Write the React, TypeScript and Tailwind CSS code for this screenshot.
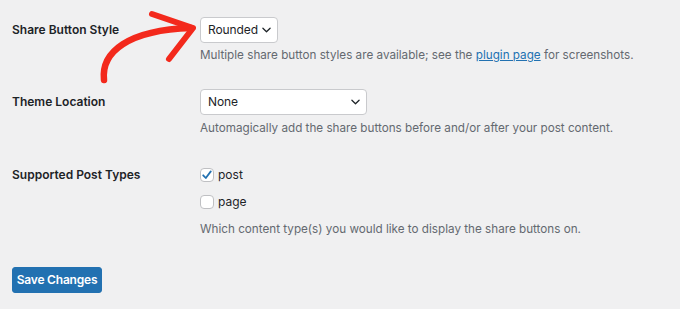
import React from "react";

function Chevron({ className }: { className?: string }) {
  return (
    <svg viewBox="0 0 10 6" className={className} fill="none">
      <path d="M1 1 L5 5 L9 1" stroke="#1d2327" strokeWidth="1.4" strokeLinecap="round" strokeLinejoin="round" />
    </svg>
  );
}

function Select({ value, width }: { value: string; width: string }) {
  return (
    <div
      className={`flex h-[26px] items-center justify-between rounded-[4px] border border-[#c9cacd] bg-white pl-[7px] pr-[6px] text-[12px] tracking-[-0.1px] text-[#1d2327] ${width}`}
    >
      <span>{value}</span>
      <Chevron className="h-[6px] w-[9px] shrink-0" />
    </div>
  );
}

function Checkbox({ checked }: { checked: boolean }) {
  return (
    <div className="flex h-[14px] w-[14px] items-center justify-center rounded-[4px] border border-[#bfc0c3] bg-white">
      {checked && (
        <svg viewBox="0 0 12 12" className="h-[12px] w-[12px]" fill="none">
          <path d="M2.2 6.3 L4.8 9 L9.8 2.4" stroke="#2271b1" strokeWidth="1.8" strokeLinecap="round" strokeLinejoin="round" />
        </svg>
      )}
    </div>
  );
}

export default function App() {
  return (
    <div
      className="relative h-[309px] w-[680px] overflow-hidden bg-[#f0f0f1] pl-[12px] text-[#1d2327]"
      style={{ fontFamily: "Inter, 'Liberation Sans', sans-serif" }}
    >
      {/* Row 1 */}
      <div className="flex pt-[17px]">
        <div className="flex h-[26px] w-[188px] items-center text-[12px] font-semibold">Share Button Style</div>
        <div className="flex flex-col">
          <Select value="Rounded" width="w-[78px]" />
          <p className="mt-[4px] text-[11.7px] leading-[16px] text-[#646970]">
            Multiple share button styles are available; see the{" "}
            <a className="text-[#2271b1] underline">plugin page</a> for screenshots.
          </p>
        </div>
      </div>

      {/* Row 2 */}
      <div className="flex pt-[26px]">
        <div className="flex h-[26px] w-[188px] items-center text-[12px] font-semibold">Theme Location</div>
        <div className="flex flex-col">
          <Select value="None" width="w-[167px]" />
          <p className="mt-[5px] text-[11.7px] leading-[16px] text-[#646970]">
            Automagically add the share buttons before and/or after your post content.
          </p>
        </div>
      </div>

      {/* Row 3 */}
      <div className="flex pt-[31px]">
        <div className="flex h-[16px] w-[188px] items-center text-[12px] font-semibold">Supported Post Types</div>
        <div className="flex flex-col">
          <label className="flex h-[16px] items-center gap-[4px] text-[12px]">
            <Checkbox checked />
            <span>post</span>
          </label>
          <label className="mt-[11px] flex h-[16px] items-center gap-[4px] text-[12px]">
            <Checkbox checked={false} />
            <span>page</span>
          </label>
          <p className="mt-[11px] text-[11.7px] leading-[16px] text-[#646970]">
            Which content type(s) you would like to display the share buttons on.
          </p>
        </div>
      </div>

      {/* Save */}
      <div className="pt-[30px]">
        <button className="flex h-[26px] w-[90px] items-center justify-center rounded-[3px] border border-[#2271b1] bg-[#2271b1] text-[12px] font-semibold tracking-[-0.2px] text-white">
          Save Changes
        </button>
      </div>

      {/* Arrow annotation */}
      <svg className="pointer-events-none absolute left-0 top-0" width="680" height="309" viewBox="0 0 680 309" fill="none">
        <path d="M104 80 C101 52, 128 30, 191 28" stroke="#f3291c" strokeWidth="6.5" strokeLinecap="round" />
        <path d="M152 14 L193 28 L169 59" stroke="#f3291c" strokeWidth="6" strokeLinecap="round" strokeLinejoin="round" />
      </svg>
    </div>
  );
}
